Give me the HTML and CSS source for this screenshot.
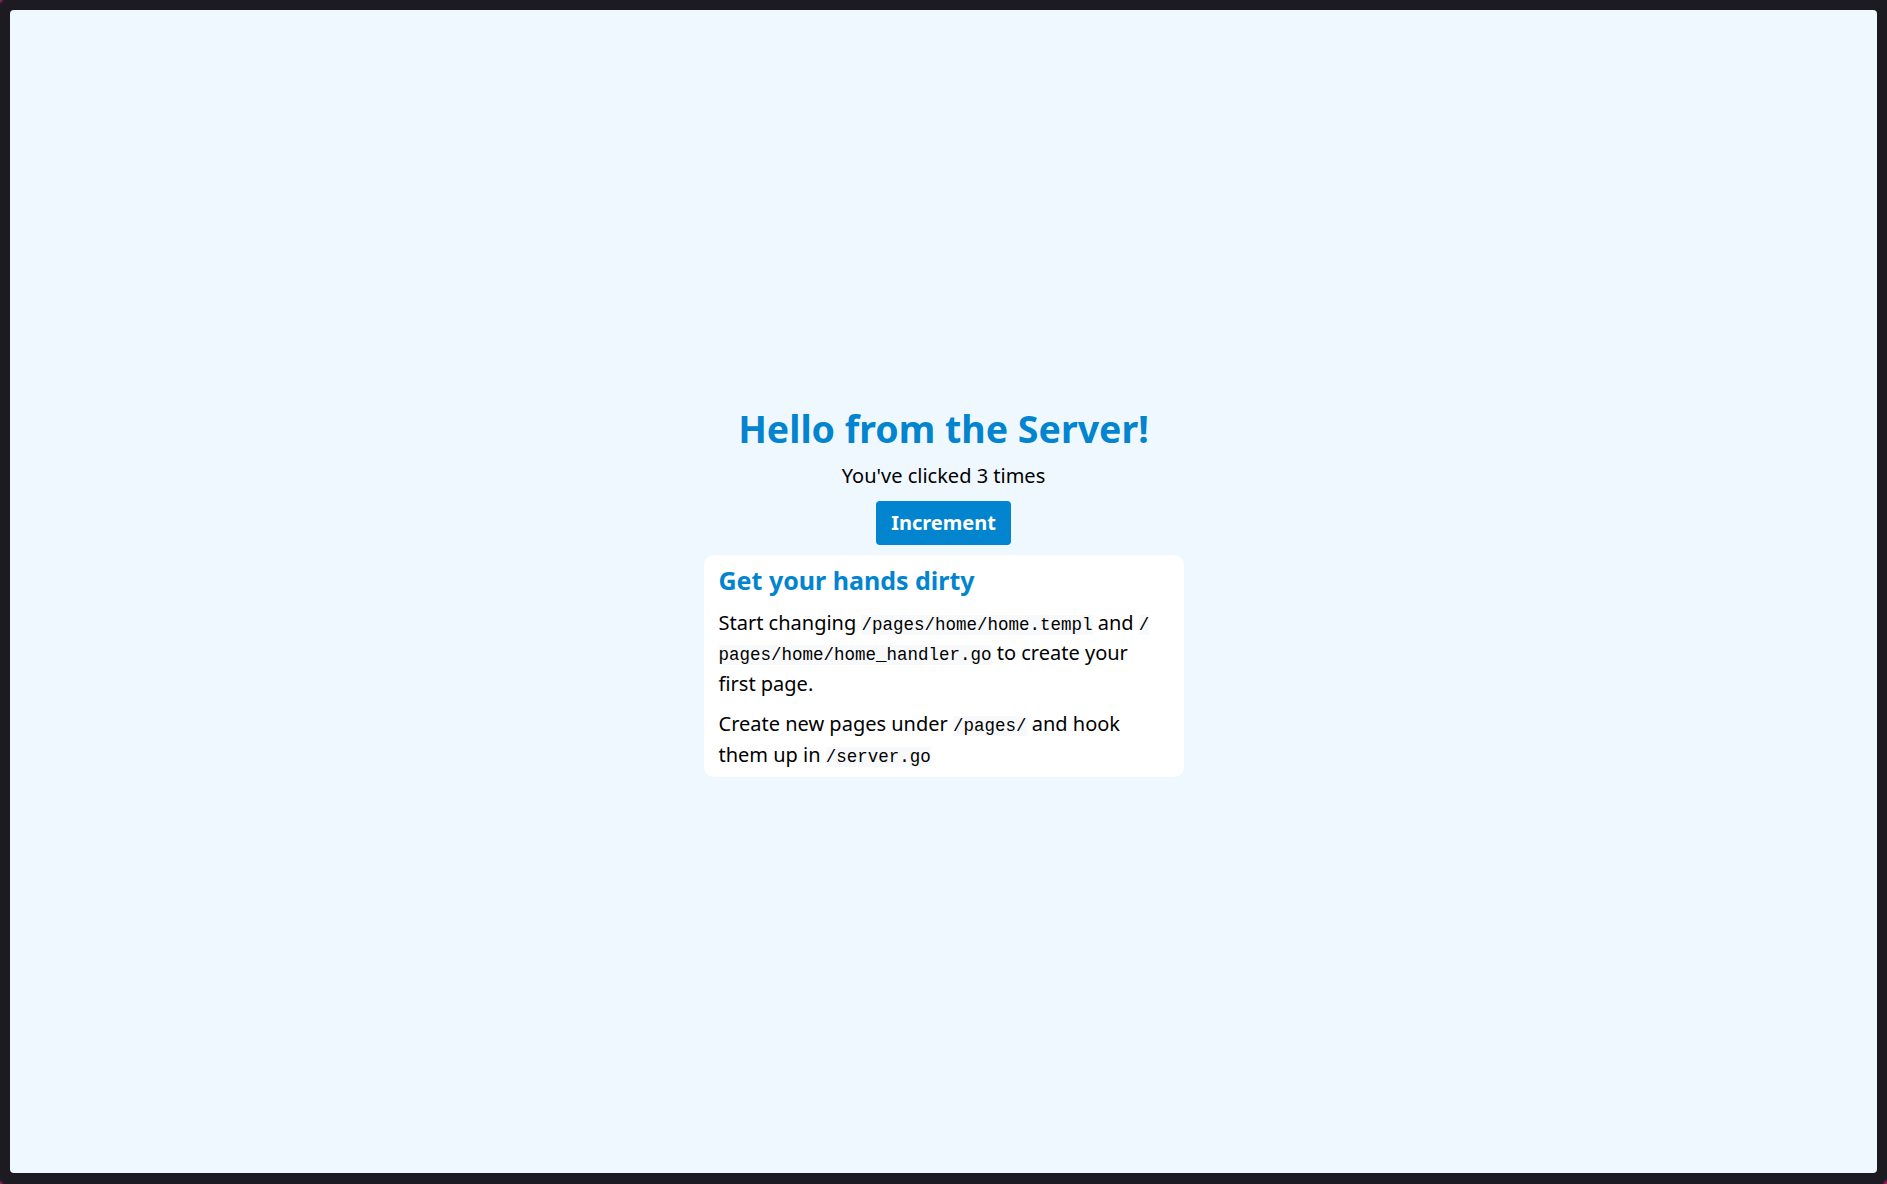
FILE: index.html
```html
<!DOCTYPE html>
<html lang="en">
<head>
<meta charset="utf-8">
<title>Hello from the Server!</title>
<link rel="stylesheet" href="styles.css">
</head>
<body>
<div class="viewport">
  <main class="main">
    <h1 class="title">Hello from the Server!</h1>
    <p class="count">You've clicked 3 times</p>
    <button class="btn" type="button">Increment</button>
    <section class="card">
      <h2 class="card-title">Get your hands dirty</h2>
      <p class="card-text">Start changing <code class="code">/pages/home/home.templ</code> and <code class="code">/<wbr>pages/home/home_handler.go</code> to create your first page.</p>
      <p class="card-text">Create new pages under <code class="code">/pages/</code> and hook them up in <code class="code">/server.go</code></p>
    </section>
  </main>
</div>
</body>
</html>
```

FILE: styles.css
```css
* { box-sizing: border-box; }

html, body {
  height: 100%;
}

html {
  background:
    radial-gradient(circle at 0 0, #b0206a 0, rgba(176, 32, 106, 0) 4px),
    radial-gradient(circle at 100% 100%, #d0207a 0, rgba(208, 32, 122, 0) 5px),
    radial-gradient(circle at 0 100%, #b0206a 0, rgba(176, 32, 106, 0) 4px),
    #1c1b22;
}

body {
  margin: 0;
  padding: 10px 10px 11px 10px;
  font-family: "Noto Sans", "DejaVu Sans", sans-serif;
  color: #000;
}

.viewport {
  height: 100%;
  background: #f0f8ff;
  border-radius: 4px;
}

.main {
  height: 100%;
  display: flex;
  flex-direction: column;
  align-items: center;
  justify-content: center;
  gap: 10px;
}

.title {
  margin: 0;
  font-size: 37.5px;
  line-height: 45px;
  font-weight: 700;
  color: #0284cf;
}

.count {
  margin: 0;
  font-size: 20px;
  line-height: 30px;
}

.btn {
  margin: 0;
  padding: 7px 15px;
  border: none;
  border-radius: 4px;
  background: #0284cf;
  color: #fff;
  font-family: "Noto Sans", "DejaVu Sans", sans-serif;
  font-size: 20px;
  line-height: 30px;
  font-weight: 700;
  cursor: pointer;
}

.card {
  width: 480px;
  padding: 8px 15px 7px 15px;
  background: #fff;
  border-radius: 10px;
  display: flex;
  flex-direction: column;
  gap: 10px;
}

.card-title {
  margin: 0;
  font-size: 25px;
  line-height: 35px;
  font-weight: 700;
  color: #0284cf;
}

.card-text {
  margin: 0;
  font-size: 20px;
  line-height: 30.5px;
}

.code {
  font-family: "Liberation Mono", "DejaVu Sans Mono", monospace;
  font-size: 17.5px;
  line-height: 1;
  background: #f7f9fb;
}
```
